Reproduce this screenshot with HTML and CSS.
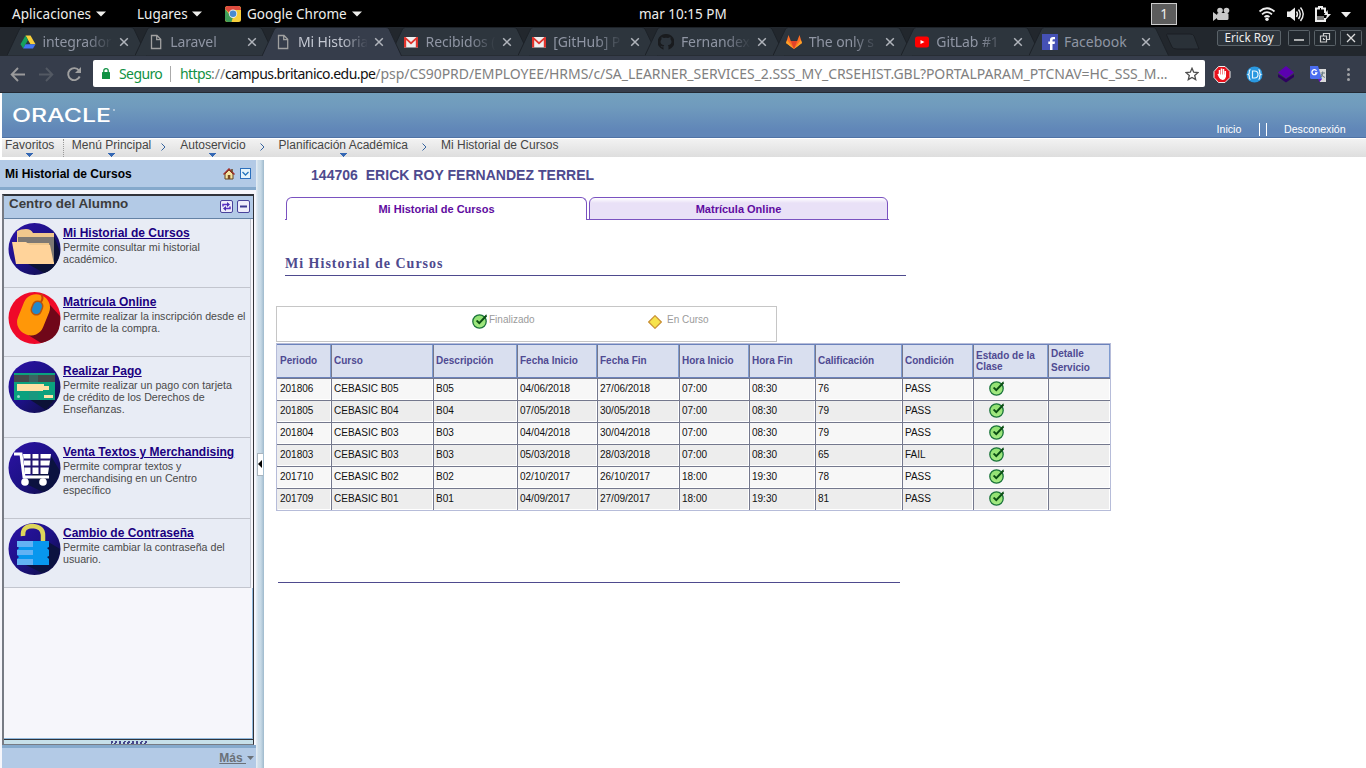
FILE: index.html
```html
<!DOCTYPE html>
<html lang="es">
<head>
<meta charset="utf-8">
<title>Mi Historial de Cursos</title>
<link rel="stylesheet" href="styles.css">
</head>
<body>
<svg class="defs" width="0" height="0">
  <defs>
    <linearGradient id="night" x1="0" y1="0" x2="1" y2="1"><stop offset="0" stop-color="#2d12a6"/><stop offset=".5" stop-color="#1d1187"/><stop offset="1" stop-color="#0c0d38"/></linearGradient>
    <linearGradient id="greenFill" x1="0" y1="0" x2="0" y2="1"><stop offset="0" stop-color="#8fe070"/><stop offset="1" stop-color="#a5ea83"/></linearGradient>
  </defs>
  <symbol id="tabshape" viewBox="0 0 140 29"><path d="M0 28.5 L12.5 2 Q13.500 .5 15.500 .5 H124 Q126 .5 127 2 L139.500 28.500" fill="#2d353d" stroke="#1d2228"/></symbol>
  <symbol id="tabactive" viewBox="0 0 140 29"><path d="M0 29 L12.500 2 Q13.500 .5 15.500 .5 H124 Q126 .5 127 2 L139.500 29" fill="#363d4b" stroke="#1f242c"/></symbol>
  <symbol id="x" viewBox="0 0 10 10"><path d="M1.200 1.200 L8.800 8.800 M8.800 1.200 L1.200 8.800" stroke="#b0b4bb" stroke-width="1.500"/></symbol>
  <symbol id="page" viewBox="0 0 16 16"><path d="M3.500 1.500 H9 L12.700 5.300 V14.500 H3.500 Z M8.700 1.500 V5.600 H12.700" fill="none" stroke="#a0a0a0" stroke-width="1.300"/></symbol>
  <symbol id="mail" viewBox="0 0 16 16"><path d="M1 3 H15 V13.500 H1 Z" fill="#efefef"/><path d="M1 3 V13.500 H3.200 V6 L8 10.500 L12.800 6 V13.500 H15 V3 L13.500 3 L8 8 L2.500 3 Z" fill="#e0342d"/></symbol>
  <symbol id="caret" viewBox="0 0 10 6"><path d="M0 .4 H10 L5 5.600 Z" fill="#eeeeec"/></symbol>
  <symbol id="ok" viewBox="0 0 16 16"><circle cx="7.500" cy="8.500" r="6.700" fill="url(#greenFill)" stroke="#1b743b" stroke-width="1.300"/><path d="M3.800 8 L5.500 7 L7.200 8.800 L14.300 1.300 L15 3.500 L7.300 11.600 Z" fill="#0a4d13"/></symbol>
  <symbol id="down" viewBox="0 0 7 4"><path d="M0 0 H7 V1 H6 V2 H5 V3 H4 V4 H3 V3 H2 V2 H1 V1 H0 Z" fill="#3568b4"/></symbol>
  <symbol id="next" viewBox="0 0 5 8"><path d="M.5 .5 L4 4 L.5 7.500" fill="none" stroke="#35639f"/></symbol>
</svg>

<header class="gnome">
  <span class="g1">Aplicaciones</span><svg class="caret"><use href="#caret"/></svg>
  <span class="g2">Lugares</span><svg class="caret"><use href="#caret"/></svg>
  <svg class="chrome" viewBox="0 0 16 16"><rect width="16" height="16" rx="2.500" fill="#f7cf3b"/><path d="M0 3 Q0 0 3 0 H13 Q16 0 16 4 H8 L4.500 7 Z" fill="#dd4b3e"/><path d="M0 3 L5 9 L8 11 L6.500 16 H3 Q0 16 0 13 Z" fill="#3f9d58"/><circle cx="8" cy="7.800" r="4.200" fill="#eee"/><circle cx="8" cy="7.800" r="3.300" fill="#4a8bd0"/></svg>
  <span class="g3">Google Chrome</span><svg class="caret"><use href="#caret"/></svg>
  <span class="clock">mar 10:15 PM</span>
  <span class="ws">1</span>
  <svg class="tray" viewBox="0 0 160 26">
    <g fill="#c9c9c9"><circle cx="12" cy="9.500" r="2.800"/><circle cx="18.500" cy="9.500" r="2.800"/><rect x="9" y="12" width="11.500" height="7" rx="1.500"/><path d="M5 11 L9 14 V17 L5 20 Z"/></g>
    <g fill="none" stroke="#eee" stroke-width="1.700"><path d="M51.500 10.500 Q59 4 66.500 10.500"/><path d="M54 13.300 Q59 9 64 13.300"/><path d="M56.500 16 Q59 14 61.500 16"/></g><circle cx="59" cy="18.200" r="1.700" fill="#eee"/>
    <path d="M79 10.500 H82 L87 6.500 V20 L82 16 H79 Z" fill="#eee"/><path d="M88.500 10.500 Q90.500 13 88.500 16 M90.500 8.500 Q94 13 90.500 18 M92.500 6.500 Q98 13 92.500 20" fill="none" stroke="#eee" stroke-width="1.400"/>
    <path d="M108 9 V20 H117 V17 M108 9 V7.500 H111 V6 H114 V7.500 H117 V12" fill="none" stroke="#eee" stroke-width="2"/><path d="M109 15 H116 V19 H109 Z" fill="#777"/><path d="M119.500 9 L116 14 H119 L117.500 19 L123 13 H120 Z" fill="#eee"/>
    <path d="M133 11 H143 L138 16.500 Z" fill="#eee"/>
  </svg>
</header>

<div class="tabs">
  <div class="tab"><svg class="shape"><use href="#tabshape"/></svg><svg class="fav" viewBox="0 0 16 16"><path d="M5.500 1.500 H10.500 L15.500 10.300 H10.500 Z" fill="#f9d03b"/><path d="M5.500 1.500 L.5 10.300 L3.200 14.500 L8 6 Z" fill="#16a05d"/><path d="M5.500 10.300 H15.500 L13 14.500 H3.200 Z" fill="#4275f4"/></svg><span>integrador-</span><svg class="x"><use href="#x"/></svg></div>
  <div class="tab"><svg class="shape"><use href="#tabshape"/></svg><svg class="fav"><use href="#page"/></svg><span>Laravel</span><svg class="x"><use href="#x"/></svg></div>
  <div class="tab on"><svg class="shape"><use href="#tabactive"/></svg><svg class="fav"><use href="#page"/></svg><span>Mi Historia</span><svg class="x"><use href="#x"/></svg></div>
  <div class="tab"><svg class="shape"><use href="#tabshape"/></svg><svg class="fav"><use href="#mail"/></svg><span>Recibidos (</span><svg class="x"><use href="#x"/></svg></div>
  <div class="tab"><svg class="shape"><use href="#tabshape"/></svg><svg class="fav"><use href="#mail"/></svg><span>[GitHub] P</span><svg class="x"><use href="#x"/></svg></div>
  <div class="tab"><svg class="shape"><use href="#tabshape"/></svg><svg class="fav" viewBox="0 0 16 16"><path d="M8 0 A8 8 0 0 0 5.500 15.700 V13.200 C3.500 13.700 3 12.500 2.500 11.700 C4 11.700 4 13 5.800 12.300 L6.200 11.300 C2 10.700 1.800 7 3.500 5.200 L3.500 3 L5.800 4 Q8 3.400 10.200 4 L12.500 3 L12.500 5.200 C14.200 7 14 10.700 9.900 11.300 L10.500 12.500 V15.700 A8 8 0 0 0 8 0 Z" fill="#191b1e"/></svg><span>Fernandex</span><svg class="x"><use href="#x"/></svg></div>
  <div class="tab"><svg class="shape"><use href="#tabshape"/></svg><svg class="fav" viewBox="0 0 16 16"><path d="M2.500 1 L4.800 7 H11.200 L13.500 1 L16 9 L8 15 L0 9 Z" fill="#fc6d26"/><path d="M4.800 7 H11.200 L8 15 Z" fill="#e24329"/><path d="M1.200 6 L0 9 L8 15 Z M14.800 6 L16 9 L8 15 Z" fill="#fca326"/></svg><span>The only s</span><svg class="x"><use href="#x"/></svg></div>
  <div class="tab"><svg class="shape"><use href="#tabshape"/></svg><svg class="fav" viewBox="0 0 16 16"><rect x="1" y="2.500" width="14" height="11" rx="2.500" fill="#f00"/><path d="M6.500 6 L10.500 8 L6.500 10 Z" fill="#fff"/></svg><span>GitLab #1</span><svg class="x"><use href="#x"/></svg></div>
  <div class="tab"><svg class="shape"><use href="#tabshape"/></svg><svg class="fav" viewBox="0 0 16 16"><rect width="16" height="16" fill="#4551b5"/><path d="M8 16 V10 H6.300 V7.500 H8 V5.500 Q8 3 11 3 H13 V5.300 H11.500 Q10.500 5.300 10.500 6.300 V7.500 H13 L12.600 10 H10.500 V16 Z" fill="#fff"/></svg><span class="full">Facebook</span><svg class="x"><use href="#x"/></svg></div>
  <svg class="newtab" viewBox="0 0 36 18"><path d="M2 1 H25 Q28 1 29 3 L34 16 H12 Q8 16 7 14 L2 3 Q1 1 2 1 Z" fill="#2a3138" stroke="#1b1f24"/></svg>
  <div class="wins"><span class="user">Erick Roy</span>
    <svg class="wb" viewBox="0 0 22 16"><rect x=".5" y=".5" width="21" height="15" rx="1" /><path d="M6 10 H16" stroke="#ddd" stroke-width="1.500"/></svg>
    <svg class="wb" viewBox="0 0 22 16"><rect x=".5" y=".5" width="21" height="15" rx="1"/><path d="M6.500 6 H12.500 V12 H6.500 Z M9.500 6 V3.500 H15.500 V9.500 H12.500 M9.500 8 V9.500 H11" fill="none" stroke="#ccc" stroke-width="1.200"/></svg>
    <svg class="wb" viewBox="0 0 22 16"><rect x=".5" y=".5" width="21" height="15" rx="1"/><path d="M7 4 L15 12 M15 4 L7 12" stroke="#ddd" stroke-width="1.300"/></svg>
  </div>
</div>

<div class="toolbar">
  <svg class="navicons" viewBox="0 0 92 36"><path d="M25 18.500 H12 M18 12 L11.700 18.500 L18 25" fill="none" stroke="#9a9a9b" stroke-width="1.900"/><path d="M39 18.500 H52 M46 12 L52.300 18.500 L46 25" fill="none" stroke="#535963" stroke-width="1.900"/><path d="M79 14.500 A6 6 0 1 0 79.700 20.500" fill="none" stroke="#a0a0a0" stroke-width="1.900"/><path d="M81 11 V17 H75 Z" fill="#a0a0a0"/></svg>
  <div class="omni">
    <svg class="lock" viewBox="0 0 8 11"><rect y="4" width="8" height="7" rx=".6" fill="#109144"/><path d="M1.800 4 V2.800 Q1.800 .7 4 .7 Q6.200 .7 6.200 2.800 V4" fill="none" stroke="#109144" stroke-width="1.300"/></svg>
    <span class="secure">Seguro</span><i></i>
    <span class="url"><b>https</b>://<em>campus.britanico.edu.pe</em>/psp/CS90PRD/EMPLOYEE/HRMS/c/SA_LEARNER_SERVICES_2.SSS_MY_CRSEHIST.GBL?PORTALPARAM_PTCNAV=HC_SSS_M...</span>
    <svg class="star" viewBox="0 0 14 14"><path d="M7 1.300 L8.700 5.200 L13 5.600 L9.700 8.400 L10.700 12.600 L7 10.400 L3.300 12.600 L4.300 8.400 L1 5.600 L5.300 5.200 Z" fill="none" stroke="#4e4e4e" stroke-width="1.300"/></svg>
  </div>
  <svg class="exts" viewBox="0 0 160 36">
    <path d="M12.500 10.500 H19 L24 15.500 V21.500 L19 26.500 H12.500 L8 21.500 V15.500 Z" fill="#e8111c" stroke="#eee"/><path d="M13.500 20 V14 M15.500 19 V12.500 M17.500 19 V13 M19.300 19 V15 M12 18 L14 21.500" stroke="#fff" stroke-width="1.500"/><path d="M12.800 18.500 H20 V20.500 Q19 24 16.500 24 Q14 24 12.800 21 Z" fill="#fff"/>
    <circle cx="48.500" cy="18.500" r="8" fill="#2a98e0"/><path d="M46.500 15 H48.500 Q52 15 52 18.500 Q52 22 48.500 22 H46.500 Z M44.500 13.500 Q43 14 43.300 16 Q43.500 18 42.300 18.500 Q43.500 19 43.300 21 Q43 23 44.500 23.500 M52.500 13.500 Q54 14 53.700 16 Q53.500 18 54.700 18.500 Q53.500 19 53.700 21 Q54 23 52.500 23.500" fill="none" stroke="#e8f5fc" stroke-width="1.200"/>
    <path d="M72 18 L80 23 L88 18 V21 L80 26.500 L72 21 Z" fill="#2e0060"/><path d="M80 10 L88 16.500 L80 22.500 L72 16.500 Z" fill="#5b00b0"/>
    <path d="M111 13 H120 V26 H114 Z" fill="#dadada"/><path d="M104 10 H112 L116 23 H105.500 Q104 23 104 21.500 Z" fill="#4b6df0"/><path d="M112 23 H116 L113.500 26 Z" fill="#6513c6"/><path d="M114.500 17 H119 M116.700 15.500 V17 Q116.500 21 113.500 22 M115 18 Q116 20.500 119 21.500" stroke="#687b83" fill="none" stroke-width="1"/><path d="M110.500 14.800 A2.500 2.500 0 1 0 110.800 17 H109" fill="none" stroke="#fff" stroke-width="1.300"/>
    <g fill="#a0a2a6"><circle cx="142.500" cy="13.500" r="1.500"/><circle cx="142.500" cy="18.500" r="1.500"/><circle cx="142.500" cy="23.500" r="1.500"/></g>
  </svg>
</div>

<div class="site">
  <header class="brand">
    <svg class="logo" width="104" height="18"><text x="-1" y="15.500" textLength="99" lengthAdjust="spacingAndGlyphs">ORACLE</text><circle cx="101" cy="4" r="1" fill="#c3d3e5"/></svg>
    <nav><a>Inicio</a><i></i><i></i><a>Desconexión</a></nav>
  </header>
  <nav class="crumbs">
    <div class="c1"><span>Favoritos</span><svg class="dn"><use href="#down"/></svg></div>
    <div class="c2"><span>Menú Principal</span><svg class="dn"><use href="#down"/></svg></div><svg class="nx"><use href="#next"/></svg>
    <div class="c3"><span>Autoservicio</span><svg class="dn"><use href="#down"/></svg></div><svg class="nx"><use href="#next"/></svg>
    <div class="c4"><span>Planificación Académica</span><svg class="dn"><use href="#down"/></svg></div><svg class="nx"><use href="#next"/></svg>
    <div class="c5"><span>Mi Historial de Cursos</span></div>
  </nav>
  <div class="body">
    <aside>
      <div class="sidehead"><b>Mi Historial de Cursos</b>
        <svg width="12" height="12" viewBox="0 0 12 12"><path d="M2 6 L6 2 L10 6 V11 H2 Z" fill="#f5e3a0" stroke="#65441f"/><path d="M.5 6.500 L6 1 L11.500 6.500" fill="none" stroke="#a0302a" stroke-width="1.500"/><path d="M9 1 V4" stroke="#65441f" stroke-width="1.500"/><path d="M4.800 7 H7.300 V11 H4.800 Z" fill="#7a4a20"/></svg>
        <svg width="11" height="11" viewBox="0 0 11 11"><rect x=".5" y=".5" width="10" height="10" fill="#e5f4fc" stroke="#2c70bd"/><path d="M2.500 4 L5.500 7 L8.500 4" fill="none" stroke="#2475be" stroke-width="1.300"/></svg>
      </div>
      <div class="pagelet">
        <div class="pagehead"><b>Centro del Alumno</b>
          <svg width="13" height="13" viewBox="0 0 13 13"><rect x=".5" y=".5" width="12" height="12" rx="1.500" fill="#eeecfa" stroke="#49439b"/><path d="M3 6.500 V4.500 H7.500 M10 6.500 V8.500 H5.500" fill="none" stroke="#5b30c4" stroke-width="1.500"/><path d="M7 2 L10 4.500 L7 7 Z M6 6 L3 8.500 L6 11 Z" fill="#4a2fb0"/></svg>
          <svg width="13" height="13" viewBox="0 0 13 13"><rect x=".5" y=".5" width="12" height="12" rx="1.500" fill="#eeecfa" stroke="#49439b"/><path d="M3 6.500 H10" stroke="#3c3893" stroke-width="2"/></svg>
        </div>
        <div class="item"><svg class="pic" viewBox="0 0 53 53"><circle cx="26.500" cy="26" r="26" fill="url(#night)"/><path d="M46 13 L52 29 Q49 46 36 50 L20 41 Z" fill="#0c1236"/><path d="M9 8 Q13 6 18 6 Q23 6 25 10 H46 V41 H9 Z" fill="#efc78d"/><path d="M10 14 H46 V39 H44 L41 20 H10 Z" fill="#7d7873"/><path d="M4 19 H18 L22 22 H42 L46 41 H8 Z" fill="#ffd39a"/></svg><div><a>Mi Historial de Cursos</a><p>Permite consultar mi historial<br>académico.</p></div></div>
        <div class="item"><svg class="pic" viewBox="0 0 53 53"><circle cx="26.500" cy="26" r="26" fill="#ef0929"/><path d="M42 13 L52 24 Q54 47 33 51 L17 41 Z" fill="#700719"/><rect x="12" y="2" width="27" height="42" rx="13" fill="#ff9708" transform="rotate(22 26 23)"/><path d="M33 2 Q36 6 33 10 L30 13" fill="none" stroke="#c84405" stroke-width="2"/><rect x="24" y="9" width="10" height="14" rx="5" fill="#2389cc" stroke="#b75510" stroke-width="1.500" transform="rotate(22 29 16)"/></svg><div><a>Matrícula Online</a><p>Permite realizar la inscripción desde el<br>carrito de la compra.</p></div></div>
        <div class="item tall"><svg class="pic" viewBox="0 0 53 53"><circle cx="26.500" cy="26" r="26" fill="url(#night)"/><path d="M47 38 L38 49 L21 38 Z" fill="#0c1236"/><rect x="6" y="12" width="41" height="27" fill="#0ba17e"/><path d="M6 14 H47 V21 H6 Z" fill="#44484b"/><path d="M21 12 H30 V39 H21 Z" fill="#2d8d83" opacity=".4"/><path d="M9 23 H36 V25 H41 V29 H35 V30 H9 Z" fill="#ffe0a4"/><path d="M36 34 H45 V37 H36 Z" fill="#ffe3a7"/><circle cx="10.500" cy="35.500" r="1.500" fill="#9addca"/></svg><div><a>Realizar Pago</a><p>Permite realizar un pago con tarjeta<br>de crédito de los Derechos de<br>Enseñanzas.</p></div></div>
        <div class="item tall"><svg class="pic" viewBox="0 0 53 53"><circle cx="26.500" cy="26" r="26" fill="url(#night)"/><path d="M43 14 L52 29 Q47 47 35 50 L16 41 Z" fill="#0b1240"/><path d="M6 12 H13 L16 35 H41" fill="none" stroke="#fff" stroke-width="3"/><path d="M15 12 H43 L40 32 H17 Z" fill="#fff"/><path d="M16 17.500 H43 M16 24.500 H42 M23.500 12 V32 M31.500 12 V32" stroke="#20136f" stroke-width="2"/><circle cx="17" cy="40" r="3.800" fill="#fff"/><circle cx="35" cy="40" r="3.800" fill="#fff"/></svg><div><a>Venta Textos y Merchandising</a><p>Permite comprar textos y<br>merchandising en un Centro<br>específico</p></div></div>
        <div class="item"><svg class="pic" viewBox="0 0 53 53"><circle cx="26.500" cy="26" r="26" fill="url(#night)"/><path d="M37 17 L52 26 Q50 45 34 50 L18 42 Z" fill="#0b1240"/><path d="M15 13 Q14 3 25 3 Q35 4 35 12 V19" fill="none" stroke="#ddd55b" stroke-width="4.500"/><path d="M9 18 H41 V24 L39 25 L41 27 V33 L39 34 L41 36 V42 H9 V36 L11 34 L9 32 V27 L11 25 L9 23 Z" fill="#0897ee"/><path d="M9 18 H25 V24 H9 Z M9 27 H25 V32 H9 Z M9 36 H25 V42 H9 Z" fill="#62b2f4"/></svg><div><a>Cambio de Contraseña</a><p>Permite cambiar la contraseña del<br>usuario.</p></div></div>
        <div class="void"></div>
        <div class="grip"><i></i></div>
      </div>
      <footer><a>Más&nbsp;</a><svg width="7" height="4" viewBox="0 0 7 4"><path d="M0 0 H7 L3.500 4 Z" fill="#6b7178"/></svg></footer>
    </aside>
    <div class="split"><div class="handle"><svg width="4" height="8"><path d="M4 0 V8 L0 4 Z"/></svg></div></div>
    <main>
      <h1>144706&nbsp; ERICK ROY FERNANDEZ TERREL</h1>
      <div class="ptabs"><a class="sel">Mi Historial de Cursos</a><a>Matrícula Online</a></div>
      <h2>Mi Historial de Cursos</h2>
      <div class="legend"><svg class="ic"><use href="#ok"/></svg><span class="fin">Finalizado</span><svg class="dia" viewBox="0 0 14 14"><path d="M7 .7 L13.300 7 L7 13.300 L.7 7 Z" fill="#f7e34c" stroke="#c99032" stroke-width="1.200"/></svg><span>En Curso</span></div>
      <div class="grid">
        <div class="row head"><span>Periodo</span><span>Curso</span><span>Descripción</span><span>Fecha Inicio</span><span>Fecha Fin</span><span>Hora Inicio</span><span>Hora Fin</span><span>Calificación</span><span>Condición</span><span class="two">Estado de la<br>Clase</span><span class="two loose">Detalle<br>Servicio</span></div>
        <div class="row"><span>201806</span><span>CEBASIC B05</span><span>B05</span><span>04/06/2018</span><span>27/06/2018</span><span>07:00</span><span>08:30</span><span>76</span><span>PASS</span><span><svg class="ic"><use href="#ok"/></svg></span><span></span></div>
        <div class="row alt"><span>201805</span><span>CEBASIC B04</span><span>B04</span><span>07/05/2018</span><span>30/05/2018</span><span>07:00</span><span>08:30</span><span>79</span><span>PASS</span><span><svg class="ic"><use href="#ok"/></svg></span><span></span></div>
        <div class="row"><span>201804</span><span>CEBASIC B03</span><span>B03</span><span>04/04/2018</span><span>30/04/2018</span><span>07:00</span><span>08:30</span><span>79</span><span>PASS</span><span><svg class="ic"><use href="#ok"/></svg></span><span></span></div>
        <div class="row alt"><span>201803</span><span>CEBASIC B03</span><span>B03</span><span>05/03/2018</span><span>28/03/2018</span><span>07:00</span><span>08:30</span><span>65</span><span>FAIL</span><span><svg class="ic"><use href="#ok"/></svg></span><span></span></div>
        <div class="row"><span>201710</span><span>CEBASIC B02</span><span>B02</span><span>02/10/2017</span><span>26/10/2017</span><span>18:00</span><span>19:30</span><span>78</span><span>PASS</span><span><svg class="ic"><use href="#ok"/></svg></span><span></span></div>
        <div class="row alt"><span>201709</span><span>CEBASIC B01</span><span>B01</span><span>04/09/2017</span><span>27/09/2017</span><span>18:00</span><span>19:30</span><span>81</span><span>PASS</span><span><svg class="ic"><use href="#ok"/></svg></span><span></span></div>
      </div>
      <div class="rule"></div>
    </main>
  </div>
</div>
</body>
</html>
```
FILE: styles.css
```css
* { box-sizing: border-box; }
body { margin: 0; width: 1366px; height: 768px; overflow: hidden; background: #fff; font-family: "Liberation Sans", Arial, sans-serif; display: flex; flex-direction: column; }
svg { display: block; flex: none; }
.defs { position: absolute; }
span, a, b { white-space: nowrap; }

.gnome { height: 27px; background: #000; color: #eeeeec; display: flex; align-items: center; font: 13.5px/26px "Noto Sans", sans-serif; flex: none; }
.gnome span { flex: none; }
.g1 { margin-left: 12px; width: 84px; letter-spacing: .05px; }
.g2 { margin-left: 31px; width: 55px; }
.caret { width: 10px; height: 6px; }
.chrome { width: 16px; height: 16px; margin-left: 23px; }
.g3 { margin-left: 6px; width: 105px; }
.clock { margin-left: 277px; width: 512px; }
.gnome .ws { width: 26px; height: 22px; border: 1px solid #ccc; background: #5c5c5c; text-align: center; line-height: 20px; }
.tray { width: 160px; height: 26px; margin-left: 31px; }

.tabs { height: 29px; background: #22272d; display: flex; padding-left: 7px; flex: none; font: 14px/29px "Noto Sans", sans-serif; color: #8f95a3; }
.tab { width: 127.700px; height: 29px; position: relative; display: flex; align-items: center; flex: none; padding-left: 13px; }
.tab.on { z-index: 1; color: #c4c8d2; }
.shape { position: absolute; left: 0; top: 0; width: 140px; height: 29px; }
.fav { width: 16px; height: 16px; position: relative; }
.tab span { position: relative; width: 72px; margin-left: 6.500px; letter-spacing: -.1px; -webkit-mask-image: linear-gradient(90deg, #000 60%, transparent 97%); }
.tab .full { -webkit-mask-image: none; letter-spacing: 0; }
.x { width: 10px; height: 10px; margin-left: 4.500px; position: relative; }
.newtab { width: 36px; height: 18px; margin: 6px 0 0 9px; position: relative; }
.wins { display: flex; gap: 4px; margin: 3px 0 0 16px; }
.user { width: 64px; height: 16px; border: 1px solid #5a6268; background: #2c333a; border-radius: 2px; color: #eee; font: 11.700px/13px "Noto Sans", sans-serif; text-align: center; margin-right: 3px; }
.wb { width: 22px; height: 16px; }
.wb rect { fill: #22282e; stroke: #5a6268; }

.toolbar { height: 37px; background: #363d4b; border-bottom: 1px solid #242a33; display: flex; flex: none; }
.navicons { width: 92px; height: 36px; }
.omni { width: 1112px; height: 27px; margin: 4px 1px 0; background: #fff; border-radius: 2px; display: flex; align-items: center; font: 14px/26px "Noto Sans", sans-serif; }
.lock { width: 8px; height: 11px; margin-left: 9px; }
.secure { color: #109144; margin-left: 9px; width: 51px; letter-spacing: -.6px; }
.omni i { width: 1px; height: 16px; background: #aaa; }
.url { color: #808080; margin-left: 9px; width: 1005px; letter-spacing: -.06px; }
.url b { color: #109144; font-weight: 400; letter-spacing: -.6px; }
.url em { color: #111; font-style: normal; letter-spacing: -.55px; }
.star { width: 14px; height: 14px; }
.exts { width: 160px; height: 36px; }

.site { flex: 1; display: flex; flex-direction: column; min-height: 0; }
.brand { height: 45px; margin-left: 2px; background: linear-gradient(#73a0be, #709bbd 30%, #6086b8 85%); border-bottom: 1px solid #4f72a5; display: flex; justify-content: space-between; flex: none; }
.logo { margin: 13px 0 0 11px; overflow: visible; }
.logo text { font: 500 18px Inter, sans-serif; fill: #fff; }
.brand nav { display: flex; padding-top: 30px; color: #fff; font-size: 10.670px; line-height: 13px; }
.brand nav a:first-child { width: 42.500px; }
.brand nav a:last-child { width: 82px; margin-left: 17px; }
.brand i { width: 1px; height: 13px; background: #fff; margin-right: 6px; }
.brand i + i { margin-right: 0; }
.crumbs { height: 19px; margin-left: 2px; background: linear-gradient(#f2f2f2, #dedede); border-top: 1px solid #fff; display: flex; flex: none; font-size: 12px; line-height: 13px; color: #454545; }
.crumbs div { display: flex; flex-direction: column; align-items: center; }
.dn { width: 7px; height: 4px; margin-top: 1px; }
.nx { width: 5px; height: 8px; margin-top: 4px; }
.c1 { padding: 0 9px 0 3px; border-right: 1px dotted #999; }
.c2 { margin-left: 7.500px; margin-right: 10px; }
.c3 { margin-left: 14px; margin-right: 14px; }
.c4 { margin-left: 14px; margin-right: 14px; }
.c5 { margin-left: 14px; }

.body { flex: 1; display: flex; padding-top: 3px; min-height: 0; }
aside { width: 256px; display: flex; flex-direction: column; background: #f6f6fb; flex: none; }
.sidehead { height: 30px; background: #b3cae6; border-bottom: 3px solid #85a9cc; display: flex; align-items: center; gap: 5px; font-size: 12px; padding: 0 5px; flex: none; }
.sidehead b { flex: 1; }
.pagelet { margin: 4px 2px 0; height: 551px; border: solid #777b84; border-top-color: #30333a; border-right-color: #30333a; border-width: 2px 1px 1px 2px; display: flex; flex-direction: column; flex: none; }
.pagehead { height: 23px; background: #b3cae6; border-bottom: 1px solid #6482a5; display: flex; gap: 4px; padding: 4px 3px 0 5px; font-size: 13.400px; color: #3c3c3c; flex: none; }
.pagehead b { flex: 1; line-height: 15px; margin-top: -4px; }
.item { height: 69px; background: #e8ecf5; border-bottom: 1px solid #c2c5ce; border-right: 1px solid #c2c5ce; display: flex; margin-right: 2px; padding: 4px 0 0 4px; flex: none; }
.item.tall { height: 81px; }
.pic { width: 53px; height: 53px; margin-right: 2px; }
.item a { display: block; font: bold 12px/14px "Liberation Sans", sans-serif; color: #1a0080; text-decoration: underline; margin-top: 3px; }
.item p { margin: 1px 0 0; font-size: 10.670px; line-height: 12px; color: #4a4a4a; white-space: nowrap; }
.void { flex: 1; border: 1px solid #90b8dc; border-top: 0; border-left: 0; }
.grip { height: 5px; border-top: 1px solid #30333a; background: #c6dfe9; display: flex; justify-content: center; flex: none; }
.grip i { width: 36px; margin-top: 1px; background: repeating-linear-gradient(110deg, #46468b 0 2px, #c6dfe9 2px 4px); }
footer { flex: 1; border-top: 3px solid #85a9cc; background: #b3cae6; margin-left: 2px; display: flex; align-items: center; justify-content: flex-end; padding: 0 2px 1px 0; font-weight: bold; font-size: 12px; color: #6b7178; }
footer a { text-decoration: underline; margin-right: 1px; }
.split { width: 8px; background: linear-gradient(90deg, #e8eff5, #cddde9 30%, #c7d9e6 60%, #9fbacd); display: flex; align-items: center; flex: none; }
.handle { width: 6px; height: 23px; margin-left: 1px; background: #fff; border: 1px solid #aab4bd; border-right: 0; display: flex; align-items: center; }

main { flex: 1; display: flex; flex-direction: column; align-items: flex-start; }
h1 { margin: 7px 0 0 47px; font-size: 14px; line-height: 16px; color: #4e4a8e; white-space: nowrap; letter-spacing: .03px; }
.ptabs { margin: 14px 0 0 21px; width: 604px; height: 23px; display: flex; background: linear-gradient(#7a52c0, #7a52c0) 301px 22px / 303px 1px no-repeat, linear-gradient(#7a52c0, #7a52c0) 0 22px / 2px 1px no-repeat; }
.ptabs a { width: 299px; margin-left: 2px; border: 1px solid #7a52c0; border-radius: 6px 6px 0 0; background: linear-gradient(#fff, #e9e1f7 5px); color: #600ba0; font: bold 11px/23px "Liberation Sans", sans-serif; text-align: center; }
.ptabs .sel { width: 301px; margin-left: 1px; background: none; border-bottom: 0; }
h2 { margin: 35px 0 0 21px; width: 621px; height: 21px; border-bottom: 1px solid #4e4a8e; font: bold 14px/17px "Liberation Serif", serif; letter-spacing: 1px; color: #4e4a8e; }
.legend { margin: 30px 0 0 12px; width: 501px; height: 36px; border: 1px solid #c6c6c6; display: flex; font-size: 10px; line-height: 12px; color: #9b9b9b; padding: 7px 0 0 195px; }
.legend .ic { margin-top: -1px; }
.ic { width: 16px; height: 16px; }
.fin { width: 158px; margin-left: 1px; }
.dia { width: 14px; height: 14px; margin: 1px 5px 0 1px; }
.grid { margin: 1px 0 0 12px; width: 835px; border: 1px solid #b6bcd9; }
.row { display: grid; grid-template-columns: 54px 102px 84px 80px 82px 70px 66px 87px 71px 75px 62px; height: 22px; border-top: 1px solid #74788d; background: #f7f7f7; font-size: 10px; line-height: 19px; color: #111; }
.alt { background: #ededed; }
.row span { border-left: 1px solid #74788d; padding-left: 2px; box-shadow: inset 0 -1px #fff, inset -1px 0 #fff; }
.row span:first-child { border-left-color: transparent; }
.row .ic { margin: 1px 0 0 13px; }
.head { height: 34px; border: solid #6b82bb; border-width: 1px 0; background: #d9dfef; color: #4f4a92; font-weight: bold; line-height: 31px; }
.head span { box-shadow: inset -1px 0 #7f9bd0; }
.head .two { line-height: 11px; padding-top: 5px; }
.head .loose { line-height: 14px; padding-top: 2px; }
.rule { margin: 71px 0 0 14px; width: 622px; height: 1px; background: #4e4a8e; }
```
